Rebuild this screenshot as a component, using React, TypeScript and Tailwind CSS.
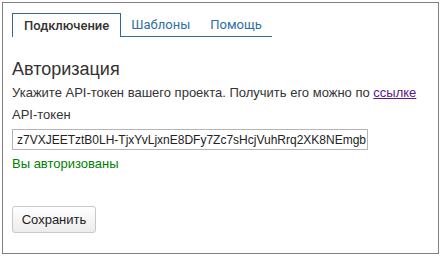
import React from "react";

export default function App() {
  return (
    <div className="w-[442px] h-[256px] bg-white pt-[2px] pl-[2px]" style={{ fontFamily: '"Liberation Sans", Arial, sans-serif' }}>
      <div className="w-[437px] h-[252px] border border-[#808080] bg-white flex flex-col">
        <div className="flex pl-[9px] pt-[10px]" style={{ fontFamily: 'Roboto, "Liberation Sans", sans-serif' }}>
          <div className="h-[24px] px-[11px] border border-b-0 border-[#2f6a96] flex items-center text-[13px] font-medium text-[#333]">
            Подключение
          </div>
          <div className="flex border-b border-[#2f6a96] h-[24px] items-center text-[13px] text-[#2f6ea3]">
            <span className="px-[10px]">Шаблоны</span>
            <span className="px-[10px]">Помощь</span>
          </div>
        </div>
        <div className="pl-[9px] pt-[20px] text-[13px] text-[#333]">
          <div className="text-[18px] leading-[24px] text-[#333]">Авторизация</div>
          <div className="mt-[3px] leading-[18px]">
            Укажите API-токен вашего проекта. Получить его можно по{" "}
            <a href="#" className="text-[#551a8b] underline">ссылке</a>
          </div>
          <div className="mt-[4px] leading-[18px]">API-токен</div>
          <div className="mt-[5px] w-[356px] h-[21px] border border-[#b5b5b5] flex items-center pl-[4px] text-[12px] text-[#222] overflow-hidden whitespace-nowrap">
            z7VXJEETztB0LH-TjxYvLjxnE8DFy7Zc7sHcjVuhRrq2XK8NEmgb
          </div>
          <div className="mt-[5px] leading-[18px] text-[#008000]">Вы авторизованы</div>
          <button className="mt-[33px] w-[84px] h-[27px] border border-[#c8c8c8] rounded-[3px] bg-gradient-to-b from-[#ffffff] to-[#ececec] text-[13px] text-[#222]">
            Сохранить
          </button>
        </div>
      </div>
    </div>
  );
}
